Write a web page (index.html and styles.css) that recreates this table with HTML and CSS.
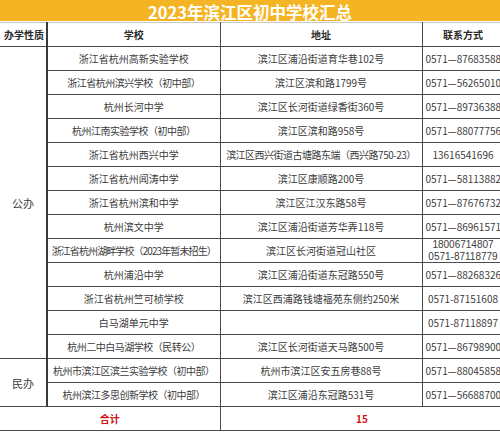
FILE: index.html
```html
<!DOCTYPE html>
<html lang="zh-CN">
<head>
<meta charset="utf-8">
<title>2023年滨江区初中学校汇总</title>
<link rel="stylesheet" href="styles.css">
</head>
<body>
<div class="page">
  <div class="title-bar"><span class="title-text">2023年滨江区初中学校汇总</span></div>
  <table class="schools">
    <colgroup>
      <col class="c-type">
      <col class="c-school">
      <col class="c-addr">
      <col class="c-phone">
    </colgroup>
    <thead>
      <tr class="head-row">
        <th class="type">办学性质</th>
        <th>学校</th>
        <th>地址</th>
        <th>联系方式</th>
      </tr>
    </thead>
    <tbody>
      <tr>
        <td class="type" rowspan="13">公办</td>
        <td>浙江省杭州高新实验学校</td>
        <td>滨江区浦沿街道育华巷102号</td>
        <td class="phone">0571—87683588</td>
      </tr>
      <tr>
        <td class="paren">浙江省杭州滨兴学校（初中部）</td>
        <td>滨江区滨和路1799号</td>
        <td class="phone">0571—56265010</td>
      </tr>
      <tr>
        <td>杭州长河中学</td>
        <td>滨江区长河街道绿香街360号</td>
        <td class="phone">0571—89736388</td>
      </tr>
      <tr>
        <td class="paren">杭州江南实验学校（初中部）</td>
        <td>滨江区滨和路958号</td>
        <td class="phone">0571—88077756</td>
      </tr>
      <tr>
        <td>浙江省杭州西兴中学</td>
        <td class="paren">滨江区西兴街道古塘路东端（西兴路750-23）</td>
        <td class="phone center">13616541696</td>
      </tr>
      <tr>
        <td>浙江省杭州闻涛中学</td>
        <td>滨江区康顺路200号</td>
        <td class="phone">0571—58113882</td>
      </tr>
      <tr>
        <td>浙江省杭州滨和中学</td>
        <td>滨江区江汉东路58号</td>
        <td class="phone">0571—87676732</td>
      </tr>
      <tr>
        <td>杭州滨文中学</td>
        <td>滨江区浦沿街道芳华弄118号</td>
        <td class="phone">0571—86961571</td>
      </tr>
      <tr>
        <td class="paren tight">浙江省杭州湖畔学校（2023年暂未招生）</td>
        <td>滨江区长河街道冠山社区</td>
        <td class="phone center two"><span class="line">18006714807</span><span class="line">0571-87118779</span></td>
      </tr>
      <tr>
        <td>杭州浦沿中学</td>
        <td>滨江区浦沿街道东冠路550号</td>
        <td class="phone">0571—88268326</td>
      </tr>
      <tr>
        <td>浙江省杭州竺可桢学校</td>
        <td>滨江区西浦路钱塘福苑东侧约250米</td>
        <td class="phone center">0571-87151608</td>
      </tr>
      <tr>
        <td>白马湖单元中学</td>
        <td></td>
        <td class="phone center">0571-87118897</td>
      </tr>
      <tr>
        <td class="paren">杭州二中白马湖学校（民转公）</td>
        <td>滨江区长河街道天马路500号</td>
        <td class="phone">0571—86798900</td>
      </tr>
      <tr>
        <td class="type" rowspan="2">民办</td>
        <td class="paren">杭州市滨江区滨兰实验学校（初中部）</td>
        <td>杭州市滨江区安五房巷88号</td>
        <td class="phone">0571—88045858</td>
      </tr>
      <tr>
        <td class="paren">杭州滨江多思创新学校（初中部）</td>
        <td>滨江区浦沿东冠路531号</td>
        <td class="phone">0571—56688700</td>
      </tr>
      <tr class="total-row">
        <td colspan="2" class="total">合计</td>
        <td colspan="2" class="total">15</td>
      </tr>
    </tbody>
  </table>
</div>
</body>
</html>
```

FILE: styles.css
```css
html, body {
  margin: 0;
  padding: 0;
  background: #ffffff;
  overflow: hidden;
}

.page {
  width: 504px;
  font-family: "Noto Sans CJK SC", "Noto Sans", sans-serif;
  color: #3c3c3c;
}

.title-bar {
  height: 21px;
  background: #f5b424;
  display: flex;
  align-items: flex-start;
  justify-content: center;
  padding-right: 4px;
}

.title-text {
  display: block;
  color: #ffffff;
  font-size: 16.5px;
  font-weight: 700;
  line-height: 24px;
  position: relative;
  z-index: 1;
}

.schools {
  margin-top: 1px;
  width: 504px;
  table-layout: fixed;
  border-collapse: collapse;
  font-size: 10px;
}

.c-type { width: 47px; }
.c-school { width: 173px; }
.c-addr { width: 202px; }
.c-phone { width: 82px; }

.schools th,
.schools td {
  border: 1px solid #4a4a4a;
  padding: 0;
  text-align: center;
  vertical-align: middle;
  white-space: nowrap;
  overflow: hidden;
  line-height: 14px;
}

.schools tr {
  height: 24px;
}

.head-row {
  height: 26px;
}

.head-row th {
  border-top: 1px solid #c8c8c8;
  font-weight: 700;
  color: #2a2a2a;
}

.schools .type {
  border-left: 0;
  border-right: 2px solid #3a3a3a;
  font-size: 11px;
}

.head-row .type {
  font-size: 10px;
  text-align: left;
  padding-left: 4px;
}

.schools .paren {
  letter-spacing: -0.5px;
}

.schools .tight {
  letter-spacing: -0.9px;
}

.schools .phone {
  text-align: left;
  padding-left: 3px;
  font-size: 10px;
  overflow: visible;
}

.schools .phone.center {
  text-align: center;
  padding-left: 0;
}

.schools .phone.two {
  font-family: "Liberation Sans", "Noto Sans", sans-serif;
  font-size: 10px;
  line-height: 11.5px;
}

.phone.two .line {
  display: block;
}

.total-row {
  height: 25px;
}

.schools .total {
  color: #d01010;
  font-weight: 700;
  border-left: 0;
}
```
